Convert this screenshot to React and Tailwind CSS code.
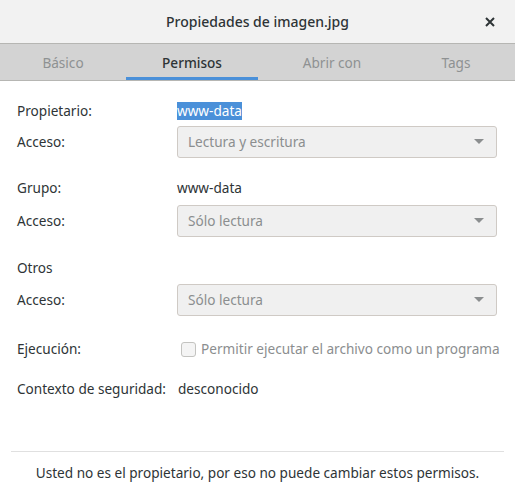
import React from 'react';

const font = { fontFamily: '"Noto Sans", "Open Sans", sans-serif' };

function Combo({ label }) {
  return (
    <div className="flex h-[32px] flex-1 items-center justify-between rounded-[3px] border border-[#cfcac5] bg-[#f0f0f0] pl-[10px] pr-[12px] text-[#8b8e8f]">
      <span>{label}</span>
      <svg width="10" height="6" viewBox="0 0 10 6">
        <path d="M0 0h10L5 5z" fill="#8b8e8f" />
      </svg>
    </div>
  );
}

function Row({ label, children, className = '' }) {
  return (
    <div className={`flex items-center ${className}`}>
      <div className="w-[160px] shrink-0">{label}</div>
      {children}
    </div>
  );
}

const tabs = [
  { t: 'Básico', w: 'w-[126px]' },
  { t: 'Permisos', w: 'w-[132px]' },
  { t: 'Abrir con', w: 'w-[148px]' },
  { t: 'Tags', w: 'w-[100px]' },
];

export default function App() {
  return (
    <div className="flex h-[494px] w-[515px] flex-col bg-white text-[13.6px] leading-[20px] text-[#2e3436]" style={font}>
      {/* header */}
      <div className="relative flex h-[44px] shrink-0 items-center justify-center border-b border-[#b6b6b3] bg-[#f2f2f2]">
        <span className="text-[14px] font-medium">Propiedades de imagen.jpg</span>
        <svg className="absolute right-[20px] top-[17px]" width="10" height="10" viewBox="0 0 10 10">
          <path d="M1 1l8 8M9 1l-8 8" stroke="#2e3436" strokeWidth="2" />
        </svg>
      </div>

      {/* tabs */}
      <div className="flex h-[37px] shrink-0 border-b border-[#b6b6b3] bg-[#d3d3d3]">
        {tabs.map(({ t, w }) => (
          <div
            key={t}
            className={`flex ${w} items-center justify-center ${
              t === 'Permisos'
                ? 'border-b-[3px] border-[#4a90d9] pt-[4px] font-medium text-[#2e3436]'
                : 'pt-[1px] text-[#8e9192]'
            }`}
          >
            {t}
          </div>
        ))}
      </div>

      {/* body */}
      <div className="flex flex-1 flex-col pl-[17px] pr-[18px] pt-[20px]">
        <Row label="Propietario:">
          <span className="bg-[#4a90d9] leading-[18px] text-white">www-data</span>
        </Row>
        <Row label="Acceso:" className="mt-[5px]">
          <Combo label="Lectura y escritura" />
        </Row>
        <Row label="Grupo:" className="mt-[20px]">
          <span>www-data</span>
        </Row>
        <Row label="Acceso:" className="mt-[7px]">
          <Combo label="Sólo lectura" />
        </Row>
        <div className="mt-[21px]">Otros</div>
        <Row label="Acceso:" className="mt-[6px]">
          <Combo label="Sólo lectura" />
        </Row>
        <Row label="Ejecución:" className="mt-[23px]">
          <div className="ml-[4px] flex items-center gap-[5px] whitespace-nowrap text-[#8b8e8f]">
            <span className="h-[15px] w-[15px] rounded-[3px] border border-[#c3c3c0] bg-[#f4f4f4]" />
            <span>Permitir ejecutar el archivo como un programa</span>
          </div>
        </Row>
        <div className="mt-[20px] flex items-center gap-[12px]">
          <span>Contexto de seguridad:</span>
          <span>desconocido</span>
        </div>
      </div>

      {/* footer */}
      <div className="mx-[11px] flex h-[43px] shrink-0 items-center justify-center border-t border-[#e0e0e0]">
        <span>Usted no es el propietario, por eso no puede cambiar estos permisos.</span>
      </div>
    </div>
  );
}
